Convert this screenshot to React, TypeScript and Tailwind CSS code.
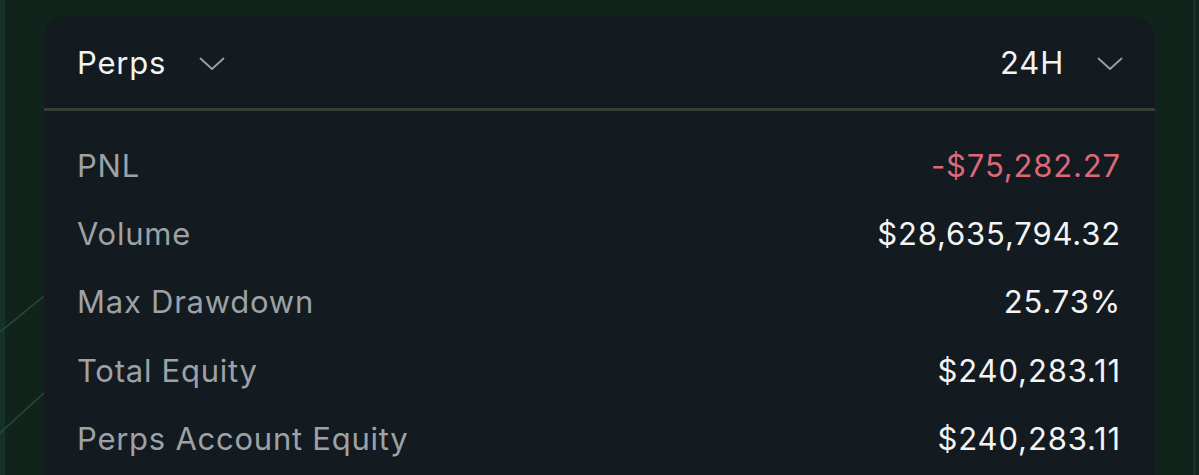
import React from "react";

const Chevron = () => (
  <svg width="26" height="14" viewBox="0 0 26 14" fill="none">
    <path d="M1.5 1.5 L13 12 L24.5 1.5" stroke="#9aa0a6" strokeWidth="1.8" strokeLinecap="round" strokeLinejoin="round" />
  </svg>
);

const rows: { label: string; value: string; red?: boolean }[] = [
  { label: "PNL", value: "-$75,282.27", red: true },
  { label: "Volume", value: "$28,635,794.32" },
  { label: "Max Drawdown", value: "25.73%" },
  { label: "Total Equity", value: "$240,283.11" },
  { label: "Perps Account Equity", value: "$240,283.11" },
];

export default function App() {
  return (
    <div
      className="relative w-full h-[475px] overflow-hidden bg-[#10241c]"
      style={{ fontFamily: "Inter, 'Noto Sans', sans-serif" }}
    >
      <svg className="absolute left-0 top-0" width="1199" height="475" viewBox="0 0 1199 475">
        <rect x="0" y="0" width="5" height="475" fill="#18302a" />
        <rect x="1193" y="0" width="3" height="475" fill="#17302a" />
        <line x1="0" y1="332" x2="44" y2="296" stroke="#2a4a3c" strokeWidth="1.5" />
        <line x1="0" y1="433" x2="44" y2="393" stroke="#2a4a3c" strokeWidth="1.5" />
      </svg>
      <div className="relative pl-[44px] pt-[16px]">
        <div className="w-[1111px] h-[500px] rounded-[22px] bg-[#131a20]">
          <div className="flex items-center justify-between h-[95px] pt-[3px] pl-[33px] pr-[32px] border-b-[3px] border-[#3a3c38]">
            <div className="flex items-center gap-[33px]">
              <span className="text-[31px] text-[#f1f3f4] tracking-[0.8px]">Perps</span>
              <Chevron />
            </div>
            <div className="flex items-center gap-[33px]">
              <span className="text-[31px] text-[#f1f3f4] tracking-[0.8px]">24H</span>
              <Chevron />
            </div>
          </div>
          <div className="flex flex-col pt-[21px] pl-[33px] pr-[34px]">
            {rows.map((r) => (
              <div key={r.label} className="flex items-center justify-between h-[68.25px]">
                <span className="text-[31px] text-[#9ca2a6] tracking-[0.75px]">{r.label}</span>
                <span className={`text-[31px] tracking-[0.85px] ${r.red ? "text-[#dc6878]" : "text-[#f3f4f5]"}`}>
                  {r.value}
                </span>
              </div>
            ))}
          </div>
        </div>
      </div>
    </div>
  );
}
